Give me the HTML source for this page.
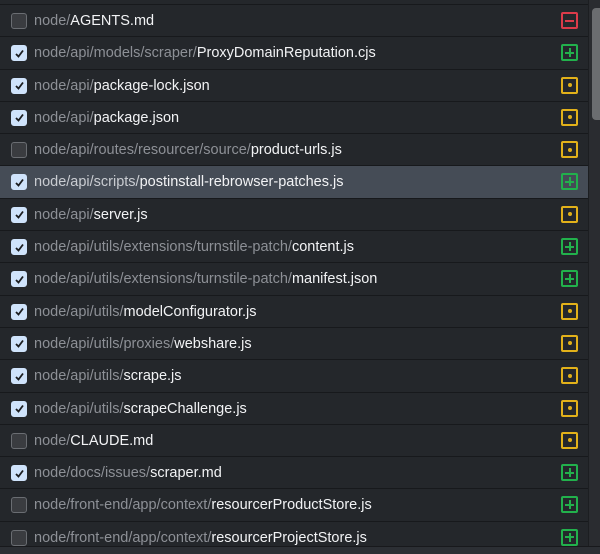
<!DOCTYPE html>
<html><head><style>
body{margin:0;width:600px;height:553px;background:#24272b;overflow:hidden;position:relative;font-family:"Liberation Sans",sans-serif}
.list{position:absolute;left:0;top:4px;width:588px}
.row{height:31.3px;border-top:1px solid #17191c;position:relative;background:#24272b}
.row.sel{background:#454c56}
.cb{position:absolute;left:11px;top:8px;width:14px;height:14px;border:1px solid #6a6d72;border-radius:3px;background:#3a3c40}
.cb.on{background:#cfe3fb;border-color:#cfe3fb}
.cb.on svg{position:absolute;left:1.5px;top:1.5px}
.t{position:absolute;left:34px;top:8px;font-size:14.5px;color:#8d9096;white-space:nowrap}
.t b{font-weight:normal;color:#f2f3f5}
.ic{position:absolute;left:561px;top:7px;width:13px;height:13px;border:2px solid;border-radius:2px;box-sizing:content-box}
.d{border-color:#dc3b4a}.a{border-color:#22b14c}.m{border-color:#e2b11a}
.ic i{position:absolute;background:currentColor}
.d{color:#dc3b4a}.a{color:#22b14c}.m{color:#e2b11a}
.h{left:2px;top:5.5px;width:9px;height:2px}
.v{left:5.5px;top:2px;width:2px;height:9px}
.dot{left:4.5px;top:4.5px;width:4px;height:4px;border-radius:50%}
.sb{position:absolute;left:588px;top:0;width:12px;height:546px;background:#2a2c30;border-left:1px solid #1c1e21}
.th{position:absolute;left:592px;top:8px;width:8px;height:112px;background:#6b6d70;border-radius:4px 0 0 4px}
.bot{position:absolute;left:0;top:546px;width:600px;height:7px;background:#2c2f34;border-top:1px solid #18191c}
</style></head><body>
<div class="list">
<div class="row"><span class="cb"></span><span class="t">node/<b>AGENTS.md</b></span><span class="ic d"><i class="h"></i></span></div>
<div class="row"><span class="cb on"><svg width="11" height="11"><path d="M2 6l2.5 2.5L9 2.5" stroke="#1b1d20" stroke-width="1.8" fill="none"/></svg></span><span class="t">node/api/models/scraper/<b>ProxyDomainReputation.cjs</b></span><span class="ic a"><i class="h"></i><i class="v"></i></span></div>
<div class="row"><span class="cb on"><svg width="11" height="11"><path d="M2 6l2.5 2.5L9 2.5" stroke="#1b1d20" stroke-width="1.8" fill="none"/></svg></span><span class="t">node/api/<b>package-lock.json</b></span><span class="ic m"><i class="dot"></i></span></div>
<div class="row"><span class="cb on"><svg width="11" height="11"><path d="M2 6l2.5 2.5L9 2.5" stroke="#1b1d20" stroke-width="1.8" fill="none"/></svg></span><span class="t">node/api/<b>package.json</b></span><span class="ic m"><i class="dot"></i></span></div>
<div class="row"><span class="cb"></span><span class="t">node/api/routes/resourcer/source/<b>product-urls.js</b></span><span class="ic m"><i class="dot"></i></span></div>
<div class="row sel"><span class="cb on"><svg width="11" height="11"><path d="M2 6l2.5 2.5L9 2.5" stroke="#1b1d20" stroke-width="1.8" fill="none"/></svg></span><span class="t" style="color:#c9ccd1">node/api/scripts/<b>postinstall-rebrowser-patches.js</b></span><span class="ic a"><i class="h"></i><i class="v"></i></span></div>
<div class="row"><span class="cb on"><svg width="11" height="11"><path d="M2 6l2.5 2.5L9 2.5" stroke="#1b1d20" stroke-width="1.8" fill="none"/></svg></span><span class="t">node/api/<b>server.js</b></span><span class="ic m"><i class="dot"></i></span></div>
<div class="row"><span class="cb on"><svg width="11" height="11"><path d="M2 6l2.5 2.5L9 2.5" stroke="#1b1d20" stroke-width="1.8" fill="none"/></svg></span><span class="t">node/api/utils/extensions/turnstile-patch/<b>content.js</b></span><span class="ic a"><i class="h"></i><i class="v"></i></span></div>
<div class="row"><span class="cb on"><svg width="11" height="11"><path d="M2 6l2.5 2.5L9 2.5" stroke="#1b1d20" stroke-width="1.8" fill="none"/></svg></span><span class="t">node/api/utils/extensions/turnstile-patch/<b>manifest.json</b></span><span class="ic a"><i class="h"></i><i class="v"></i></span></div>
<div class="row"><span class="cb on"><svg width="11" height="11"><path d="M2 6l2.5 2.5L9 2.5" stroke="#1b1d20" stroke-width="1.8" fill="none"/></svg></span><span class="t">node/api/utils/<b>modelConfigurator.js</b></span><span class="ic m"><i class="dot"></i></span></div>
<div class="row"><span class="cb on"><svg width="11" height="11"><path d="M2 6l2.5 2.5L9 2.5" stroke="#1b1d20" stroke-width="1.8" fill="none"/></svg></span><span class="t">node/api/utils/proxies/<b>webshare.js</b></span><span class="ic m"><i class="dot"></i></span></div>
<div class="row"><span class="cb on"><svg width="11" height="11"><path d="M2 6l2.5 2.5L9 2.5" stroke="#1b1d20" stroke-width="1.8" fill="none"/></svg></span><span class="t">node/api/utils/<b>scrape.js</b></span><span class="ic m"><i class="dot"></i></span></div>
<div class="row"><span class="cb on"><svg width="11" height="11"><path d="M2 6l2.5 2.5L9 2.5" stroke="#1b1d20" stroke-width="1.8" fill="none"/></svg></span><span class="t">node/api/utils/<b>scrapeChallenge.js</b></span><span class="ic m"><i class="dot"></i></span></div>
<div class="row"><span class="cb"></span><span class="t">node/<b>CLAUDE.md</b></span><span class="ic m"><i class="dot"></i></span></div>
<div class="row"><span class="cb on"><svg width="11" height="11"><path d="M2 6l2.5 2.5L9 2.5" stroke="#1b1d20" stroke-width="1.8" fill="none"/></svg></span><span class="t">node/docs/issues/<b>scraper.md</b></span><span class="ic a"><i class="h"></i><i class="v"></i></span></div>
<div class="row"><span class="cb"></span><span class="t">node/front-end/app/context/<b>resourcerProductStore.js</b></span><span class="ic a"><i class="h"></i><i class="v"></i></span></div>
<div class="row"><span class="cb"></span><span class="t">node/front-end/app/context/<b>resourcerProjectStore.js</b></span><span class="ic a"><i class="h"></i><i class="v"></i></span></div>
</div>
<div class="sb"></div><div class="th"></div>
<div class="bot"></div>
</body></html>
